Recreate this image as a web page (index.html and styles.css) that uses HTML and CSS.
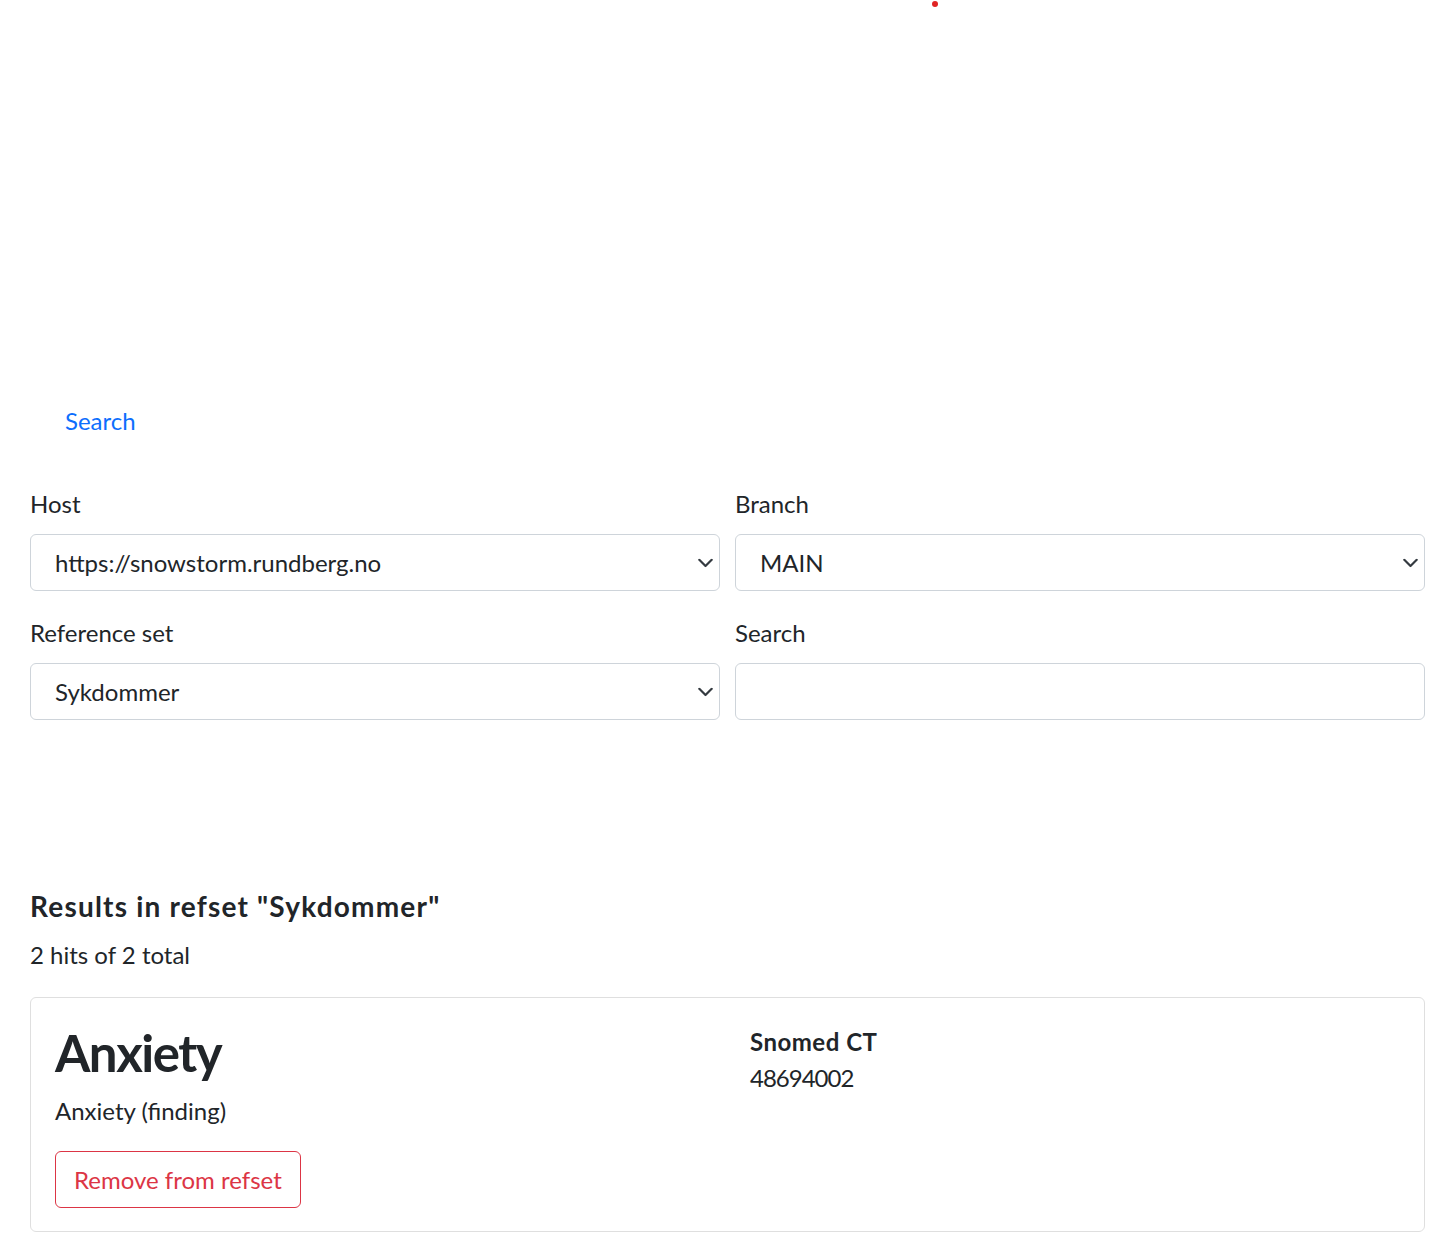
FILE: index.html
```html
<!DOCTYPE html>
<html lang="en">
<head>
<meta charset="utf-8">
<title>Refset search</title>
<link rel="stylesheet" href="styles.css">
</head>
<body>
<span class="status-dot"></span>
<main class="page">
  <nav class="nav">
    <a class="nav-link" href="#">Search</a>
  </nav>

  <form class="form-grid">
    <div class="field">
      <label class="form-label" for="host">Host</label>
      <div class="select-wrap">
        <select id="host" class="form-select">
          <option>https://snowstorm.rundberg.no</option>
        </select>
        <svg class="chevron" width="15" height="9" viewBox="0 0 15 9"><path d="M1.3 1.3 L7.5 7.5 L13.7 1.3" fill="none" stroke="#343a40" stroke-width="2.2" stroke-linecap="round" stroke-linejoin="round"/></svg>
      </div>
    </div>
    <div class="field">
      <label class="form-label" for="branch">Branch</label>
      <div class="select-wrap">
        <select id="branch" class="form-select">
          <option>MAIN</option>
        </select>
        <svg class="chevron" width="15" height="9" viewBox="0 0 15 9"><path d="M1.3 1.3 L7.5 7.5 L13.7 1.3" fill="none" stroke="#343a40" stroke-width="2.2" stroke-linecap="round" stroke-linejoin="round"/></svg>
      </div>
    </div>
    <div class="field">
      <label class="form-label" for="refset">Reference set</label>
      <div class="select-wrap">
        <select id="refset" class="form-select">
          <option>Sykdommer</option>
        </select>
        <svg class="chevron" width="15" height="9" viewBox="0 0 15 9"><path d="M1.3 1.3 L7.5 7.5 L13.7 1.3" fill="none" stroke="#343a40" stroke-width="2.2" stroke-linecap="round" stroke-linejoin="round"/></svg>
      </div>
    </div>
    <div class="field">
      <label class="form-label" for="search">Search</label>
      <input id="search" class="form-control" type="text">
    </div>
  </form>

  <section class="results">
    <h4 class="results-title">Results in refset "Sykdommer"</h4>
    <p class="results-count">2 hits of 2 total</p>

    <div class="card">
      <div class="card-body">
        <div class="concept">
          <h1 class="concept-title">Anxiety</h1>
          <p class="concept-fsn">Anxiety (finding)</p>
          <button type="button" class="btn-outline-danger">Remove from refset</button>
        </div>
        <div class="codes">
          <div class="code-system">Snomed CT</div>
          <div class="code-value">48694002</div>
        </div>
      </div>
    </div>
  </section>
</main>
</body>
</html>
```

FILE: styles.css
```css
html, body {
  margin: 0;
  padding: 0;
  background: #ffffff;
}

body {
  font-family: "Lato", "Noto Sans", "Liberation Sans", sans-serif;
  font-size: 24px;
  line-height: 36px;
  color: #212529;
  position: relative;
}

.status-dot {
  position: absolute;
  left: 932px;
  top: 1px;
  width: 6px;
  height: 6px;
  border-radius: 50%;
  background: #e02424;
}

.page {
  padding: 0 31px 0 30px;
}

.nav {
  margin-top: 391px;
  padding-left: 15px;
  display: flex;
}

.nav-link {
  display: block;
  padding: 12px 20px;
  color: #0d6efd;
  text-decoration: none;
}

.form-grid {
  margin: 35px 0 0;
  display: grid;
  grid-template-columns: 1fr 1fr;
  column-gap: 15px;
  row-gap: 24px;
}

.field {
  display: flex;
  flex-direction: column;
}

.form-label {
  display: block;
  margin-bottom: 12px;
  line-height: 36px;
}

.select-wrap {
  position: relative;
}

.form-select,
.form-control {
  display: block;
  box-sizing: border-box;
  width: 100%;
  height: 57px;
  margin: 0;
  padding: 9px 48px 9px 24px;
  font-family: inherit;
  font-size: 24px;
  line-height: 36px;
  color: #212529;
  background: #ffffff;
  border: 1px solid #ced4da;
  border-radius: 6px;
  -webkit-appearance: none;
  appearance: none;
  outline: none;
}

.form-control {
  padding-right: 24px;
}

.chevron {
  position: absolute;
  right: 7px;
  top: 50%;
  transform: translateY(-50%);
  pointer-events: none;
}

.results {
  margin-top: 169px;
}

.results-title {
  margin: 0 0 14px;
  font-size: 28px;
  line-height: 34px;
  font-weight: 700;
  letter-spacing: 1.2px;
}

.results-count {
  margin: 0 0 24px;
}

.card {
  border: 1px solid #dfdfdf;
  border-radius: 6px;
  background: #ffffff;
}

.card-body {
  padding: 24px 24px 23px;
  display: grid;
  grid-template-columns: 1fr 1fr;
  column-gap: 45px;
}

.concept-title {
  margin: 0 0 10px;
  font-size: 51px;
  line-height: 61px;
  font-weight: 700;
  letter-spacing: -1.5px;
}

.concept-fsn {
  margin: 0 0 22px;
}

.btn-outline-danger {
  display: inline-block;
  box-sizing: border-box;
  height: 57px;
  padding: 9px 18px;
  font-family: inherit;
  font-size: 24px;
  line-height: 36px;
  color: #dc3545;
  background: transparent;
  border: 1px solid #dc3545;
  border-radius: 6px;
  cursor: pointer;
}

.codes {
  padding-top: 2px;
}

.code-system {
  font-weight: 700;
  letter-spacing: 0.5px;
}

.code-value {
  letter-spacing: -1px;
}
```
